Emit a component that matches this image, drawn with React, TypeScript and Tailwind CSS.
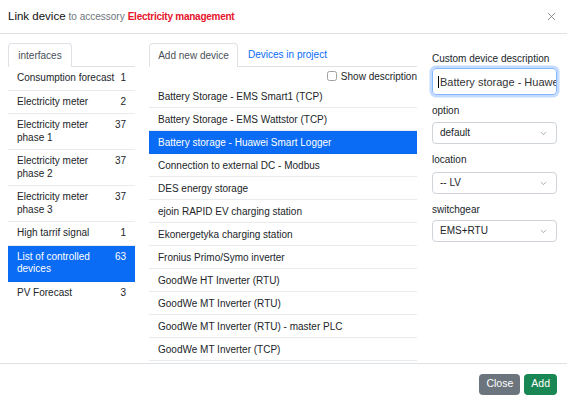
import { X, ChevronDown } from "lucide-react";

const interfaces: { name: string; count: number; active?: boolean }[] = [
  { name: "Consumption forecast", count: 1 },
  { name: "Electricity meter", count: 2 },
  { name: "Electricity meter phase 1", count: 37 },
  { name: "Electricity meter phase 2", count: 37 },
  { name: "Electricity meter phase 3", count: 37 },
  { name: "High tarrif signal", count: 1 },
  { name: "List of controlled devices", count: 63, active: true },
  { name: "PV Forecast", count: 3 },
];

const devices = [
  "Battery Storage - EMS Smart1 (TCP)",
  "Battery Storage - EMS Wattstor (TCP)",
  "Battery storage - Huawei Smart Logger",
  "Connection to external DC - Modbus",
  "DES energy storage",
  "ejoin RAPID EV charging station",
  "Ekonergetyka charging station",
  "Fronius Primo/Symo inverter",
  "GoodWe HT Inverter (RTU)",
  "GoodWe MT Inverter (RTU)",
  "GoodWe MT Inverter (RTU) - master PLC",
  "GoodWe MT Inverter (TCP)",
];

function Select({ value }: { value: string }) {
  return (
    <div className="flex h-[22px] items-center justify-between rounded-[4px] border border-[#ced4da] bg-white pl-[7px] pr-[8px] text-[10px] text-[#212529]">
      <span>{value}</span>
      <ChevronDown size={9} strokeWidth={1.3} className="text-[#555]" />
    </div>
  );
}

export default function App() {
  return (
    <div className="flex h-[404px] w-[567px] flex-col overflow-hidden bg-white text-[10px] text-[#212529] font-['Liberation_Sans',Arial,sans-serif]">
      <div className="flex h-[34px] shrink-0 items-center justify-between border-b border-[#dee2e6] pl-[8px] pr-[9px]">
        <div className="flex items-baseline gap-[3px]">
          <span className="text-[11.5px] text-[#111]">Link device</span>
          <span className="text-[10px] text-[#6c757d]">to accessory</span>
          <span className="text-[10px] font-bold tracking-[-0.25px] text-[#e5132b]">Electricity management</span>
        </div>
        <X size={13} strokeWidth={1.3} className="text-[#666]" />
      </div>

      <div className="flex min-h-0 flex-1 pl-[8px] pr-[10px] pt-[9px]">
        <div className="flex w-[127px] shrink-0 flex-col">
          <div className="flex h-[24px] shrink-0">
            <div className="flex w-[64px] items-center justify-center rounded-t-[4px] border border-b-0 border-[#dee2e6] text-[#495057]">
              interfaces
            </div>
            <div className="flex-1 border-b border-[#dee2e6]" />
          </div>
          <div className="flex flex-col">
            {interfaces.map((it) => (
              <div
                key={it.name}
                className={`flex justify-between gap-[4px] border-b px-[9px] py-[5px] leading-[12.5px] ${
                  it.active ? "border-[#0a6cf5] bg-[#0a6cf5] text-white" : "border-[#e9ecef] last:border-b-0"
                }`}
              >
                <span>{it.name}</span>
                <span>{it.count}</span>
              </div>
            ))}
          </div>
        </div>

        <div className="ml-[14px] flex w-[268px] shrink-0 flex-col overflow-hidden">
          <div className="flex h-[24px] shrink-0">
            <div className="flex w-[89px] items-center justify-center rounded-t-[4px] border border-b-0 border-[#dee2e6] text-[#495057]">
              Add new device
            </div>
            <div className="flex flex-1 items-center border-b border-[#dee2e6] pl-[10px] text-[#0a6cf5]">
              Devices in project
            </div>
          </div>
          <div className="flex h-[18px] shrink-0 items-center justify-end gap-[4px]">
            <span className="h-[10px] w-[10px] rounded-[2.5px] border border-[#a0a0a0] bg-white" />
            <span>Show description</span>
          </div>
          <div className="flex flex-col">
            {devices.map((d, i) => (
              <div
                key={d}
                className={`flex h-[23px] shrink-0 items-center border-b px-[9px] ${
                  i === 2 ? "border-[#0a6cf5] bg-[#0a6cf5] text-white" : "border-[#e9ecef]"
                }`}
              >
                {d}
              </div>
            ))}
          </div>
        </div>

        <div className="ml-[13px] flex w-[127px] min-w-0 shrink-0 flex-col pt-[10px] leading-[12px]">
          <div className="mb-[3px] pl-[2px]">Custom device description</div>
          <div className="ml-[2px] flex h-[27px] items-center overflow-hidden whitespace-nowrap rounded-[4px] border border-[#86b7fe] pl-[5px] text-[#333] shadow-[0_0_0_2.5px_rgba(13,110,253,0.25)]">
            <span className="mr-[1px] h-[12px] w-[1px] shrink-0 bg-black" />
            <span className="text-[11px]">Battery storage - Huawei Smart Logger</span>
          </div>
          <div className="mb-[5px] mt-[10px] pl-[2px]">option</div>
          <div className="pl-[2px]">
            <Select value="default" />
          </div>
          <div className="mb-[6px] mt-[10px] pl-[2px]">location</div>
          <div className="pl-[2px]">
            <Select value="-- LV" />
          </div>
          <div className="mb-[4px] mt-[10px] pl-[2px]">switchgear</div>
          <div className="pl-[2px]">
            <Select value="EMS+RTU" />
          </div>
        </div>
      </div>

      <div className="flex h-[41px] shrink-0 items-center justify-end gap-[4px] border-t border-[#dee2e6] pr-[10px]">
        <button className="h-[21px] rounded-[4px] bg-[#6c757d] px-[7px] text-[10.5px] text-white">Close</button>
        <button className="h-[21px] rounded-[4px] bg-[#198754] px-[7px] text-[10.5px] text-white">Add</button>
      </div>
    </div>
  );
}
